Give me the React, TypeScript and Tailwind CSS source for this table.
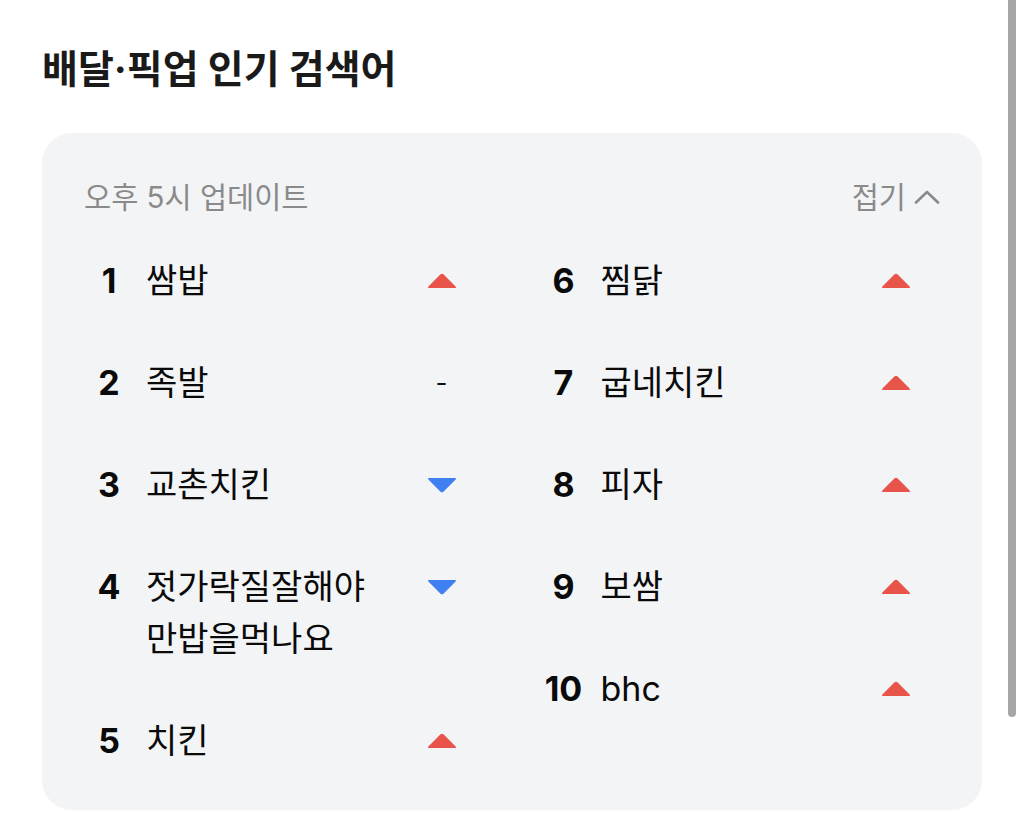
import React from "react";

type Trend = "up" | "down" | "same";
type Item = { rank: number; name: string; trend: Trend };

const left: Item[] = [
  { rank: 1, name: "쌈밥", trend: "up" },
  { rank: 2, name: "족발", trend: "same" },
  { rank: 3, name: "교촌치킨", trend: "down" },
  { rank: 4, name: "젓가락질잘해야만밥을먹나요", trend: "down" },
  { rank: 5, name: "치킨", trend: "up" },
];
const right: Item[] = [
  { rank: 6, name: "찜닭", trend: "up" },
  { rank: 7, name: "굽네치킨", trend: "up" },
  { rank: 8, name: "피자", trend: "up" },
  { rank: 9, name: "보쌈", trend: "up" },
  { rank: 10, name: "bhc", trend: "up" },
];

function Indicator({ trend }: { trend: Trend }) {
  if (trend === "same") {
    return <span className="text-[26px] leading-none text-[#111]">-</span>;
  }
  if (trend === "up") {
    return (
      <svg width="30" height="16" viewBox="0 0 30 16">
        <path d="M13.3 1.6 Q15 -0.2 16.7 1.6 L28.6 13.6 Q29.6 15 28 15 L2 15 Q0.4 15 1.4 13.6 Z" fill="#e8534a" />
      </svg>
    );
  }
  return (
    <svg width="30" height="16" viewBox="0 0 30 16">
      <path d="M13.3 14.4 Q15 16.2 16.7 14.4 L28.6 2.4 Q29.6 1 28 1 L2 1 Q0.4 1 1.4 2.4 Z" fill="#3f7ff2" />
    </svg>
  );
}

function Row({ item }: { item: Item }) {
  return (
    <div className="flex items-start">
      <div className="w-[50px] shrink-0 text-center text-[34px] font-bold leading-[52px] text-[#0a0a0a]">
        {item.rank}
      </div>
      <div className="ml-[12px] mr-[48px] flex-1 break-all text-[34px] leading-[52px] text-[#0a0a0a]">
        {item.name}
      </div>
      <div className="flex h-[52px] w-[30px] shrink-0 items-center justify-center">
        <Indicator trend={item.trend} />
      </div>
    </div>
  );
}

export default function App() {
  return (
    <div
      className="relative min-h-[826px] bg-white px-[42px] pt-[44px]"
      style={{ fontFamily: 'Inter, "Noto Sans CJK KR", sans-serif' }}
    >
      <h1 className="text-[39px] font-bold leading-[50px] text-[#1a1a1a]">
        배달·픽업 인기 검색어
      </h1>
      <div className="mt-[39px] rounded-[30px] bg-[#f3f4f6] px-[42px] pb-[43px] pt-[44px]">
        <div className="flex items-center justify-between text-[29.5px] leading-[40px] text-[#8a8a8a]">
          <span>오후 5시 업데이트</span>
          <span className="flex items-center">
            접기
            <svg className="ml-[8px]" width="26" height="14" viewBox="0 0 26 14">
              <path d="M2 12.5 L13 2 L24 12.5" fill="none" stroke="#8a8a8a" strokeWidth="2.6" strokeLinecap="round" strokeLinejoin="round" />
            </svg>
          </span>
        </div>
        <div className="mt-[38px] grid grid-cols-2 gap-x-[82px] pr-[29px]">
          <div className="flex flex-col gap-[50px]">
            {left.map((it) => (
              <Row key={it.rank} item={it} />
            ))}
          </div>
          <div className="flex flex-col gap-[50px]">
            {right.map((it) => (
              <Row key={it.rank} item={it} />
            ))}
          </div>
        </div>
      </div>
      <div className="absolute right-[8px] top-0 h-[717px] w-[8px] rounded-b-full bg-[#a6a6a6]" />
    </div>
  );
}
